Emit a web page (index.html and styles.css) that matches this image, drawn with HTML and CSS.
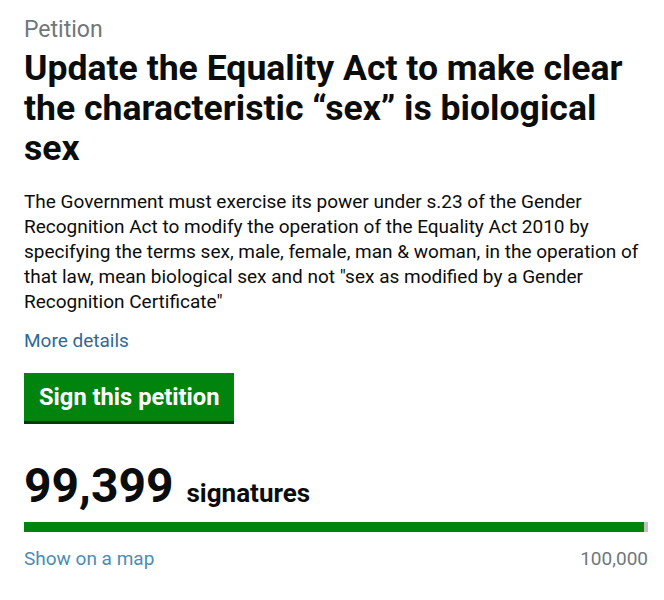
FILE: index.html
```html
<!DOCTYPE html>
<html lang="en">
<head>
<meta charset="utf-8">
<title>Petition</title>
<link rel="stylesheet" href="styles.css">
</head>
<body>
<main class="page">
  <span class="caption">Petition</span>
  <h1 class="title">Update the Equality Act to make clear the characteristic “sex” is biological sex</h1>
  <p class="summary">The Government must exercise its power under s.23 of the Gender Recognition Act to modify the operation of the Equality Act 2010 by specifying the terms sex, male, female, man &amp; woman, in the operation of that law, mean biological sex and not "sex as modified by a Gender Recognition Certificate"</p>
  <a class="more" href="#">More details</a>
  <a class="sign" href="#">Sign this petition</a>
  <div class="count"><span class="num">99,399</span><span class="label">signatures</span></div>
  <div class="bar"><div class="fill" style="width:99.4%"></div></div>
  <div class="foot">
    <a class="map" href="#">Show on a map</a>
    <span class="target">100,000</span>
  </div>
</main>
</body>
</html>
```

FILE: styles.css
```css
html, body { margin: 0; padding: 0; background: #fff; }
body { font-family: Roboto, "Noto Sans", sans-serif; color: #0b0c0c; }
.page { display: flex; flex-direction: column; align-items: flex-start; padding: 15px 16px 0 24px; }
.caption { font-size: 23px; line-height: 30px; color: #6f777b; }
.title { font-size: 35.6px; line-height: 40px; font-weight: 700; margin: 3px 0 0; }
.summary { font-size: 19px; line-height: 25px; margin: 21px 0 0; }
.more { font-size: 19px; line-height: 25px; color: #2b6a96; text-decoration: none; margin-top: 14px; }
.sign { margin-top: 20px; background: #00840d; color: #fff; font-size: 23.7px; font-weight: 700; line-height: 24px; padding: 12px 14px 12px 15px; text-decoration: none; box-shadow: 0 3px 0 #003a0a; }
.count { margin-top: 40px; display: flex; align-items: baseline; gap: 13px; }
.num { font-size: 48px; font-weight: 700; line-height: 50px; }
.label { font-size: 26px; font-weight: 700; }
.bar { align-self: stretch; height: 10px; background: #bfc1c3; margin-top: 11px; }
.fill { height: 100%; background: #00840d; }
.foot { align-self: stretch; display: flex; justify-content: space-between; margin-top: 14px; font-size: 19px; line-height: 25px; }
.map { color: #4a8db5; text-decoration: none; }
.target { color: #6f777b; }
```
